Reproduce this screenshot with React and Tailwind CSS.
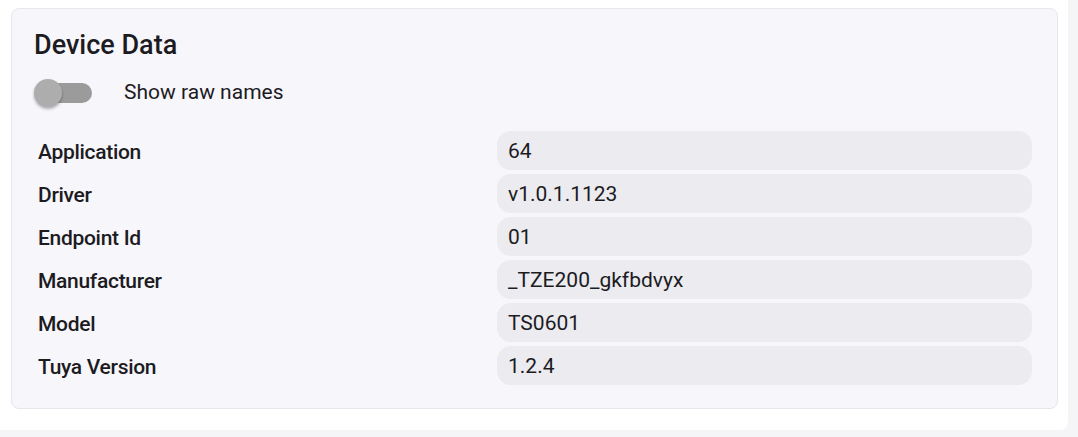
import React from 'react'

const rows = [
  ['Application', '64'],
  ['Driver', 'v1.0.1.1123'],
  ['Endpoint Id', '01'],
  ['Manufacturer', '_TZE200_gkfbdvyx'],
  ['Model', 'TS0601'],
  ['Tuya Version', '1.2.4'],
]

export default function App() {
  return (
    <div className="h-[437px] w-[1078px] bg-[#f5f5f7] font-['Roboto',sans-serif] text-[#1c1b1f]">
      <div className="h-[430px] w-[1068px] bg-white rounded-br-lg pl-[11px] pr-[10px] pt-[8px]">
        {/* Card */}
        <div className="h-[401px] rounded-lg border border-[#e6e6ec] bg-[#f7f6fb] pl-[22px] pr-[25px] pt-[20px]">
          <h2 className="text-[27px] font-medium leading-[32px]">Device Data</h2>

          <div className="mt-[16px] flex items-center">
            <div className="relative h-[30px] w-[60px] flex items-center">
              <div className="ml-[10px] h-[20px] w-[48px] rounded-full bg-[#9b9b9b]" />
              <div className="absolute left-0 top-[1px] h-[28px] w-[28px] rounded-full bg-[#adadad] shadow-[0_2px_3px_rgba(0,0,0,0.3)]" />
            </div>
            <span className="ml-[30px] text-[21px]">Show raw names</span>
          </div>

          <div className="mt-[22px] flex flex-col gap-[4px]">
            {rows.map(([k, v]) => (
              <div key={k} className="flex h-[39px]">
                <div className="w-[463px] pl-[4px] pt-[2px] text-[21px] font-medium leading-[39px] tracking-[-0.3px]">{k}</div>
                <div className="flex-1 rounded-[14px] bg-[#ebebf0] pl-[11px] pt-[1px] text-[21px] leading-[38px]">{v}</div>
              </div>
            ))}
          </div>
        </div>
      </div>
    </div>
  )
}
